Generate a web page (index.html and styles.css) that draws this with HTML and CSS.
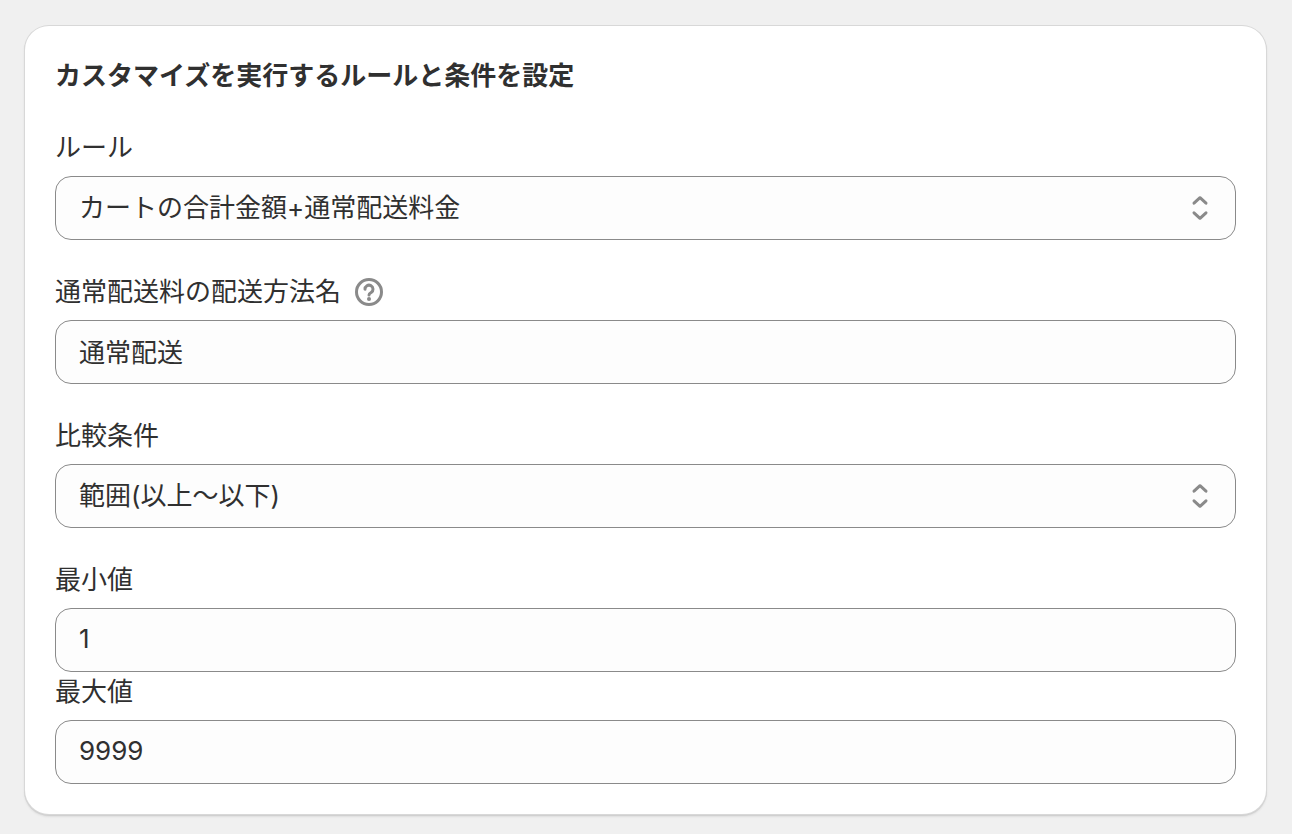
FILE: index.html
```html
<!DOCTYPE html>
<html lang="ja">
<head>
    <meta charset="UTF-8">
    <meta name="viewport" content="width=device-width, initial-scale=1.0">
    <title>ルールと条件を設定</title>
    <link rel="stylesheet" href="styles.css">
</head>
<body>
    <form class="card">
        <h2>カスタマイズを実行するルールと条件を設定</h2>
        <div class="form-group">
            <label for="rule">ルール</label>
            <div class="select">
                <select id="rule" name="rule">
                    <option>カートの合計金額+通常配送料金</option>
                </select>
                <svg class="select-icon" viewBox="0 0 20 28" aria-hidden="true"><path d="M4 9.200 10 3.700l6 5.500M4 18.800l6 5.500 6-5.500"/></svg>
            </div>
        </div>
        <div class="form-group">
            <div class="label-row">
                <label for="method_name">通常配送料の配送方法名</label>
                <button type="button" class="help" aria-label="ヘルプ">
                    <svg viewBox="0 0 28 28" aria-hidden="true"><circle cx="14" cy="14" r="12.500"/><path d="M10 11.200a4 4 0 1 1 6.200 3.300c-1.500.9-2.200 1.300-2.200 2.500"/><circle class="dot" cx="14" cy="21" r="2"/></svg>
                </button>
            </div>
            <input type="text" id="method_name" name="method_name" value="通常配送">
        </div>
        <div class="form-group">
            <label for="condition">比較条件</label>
            <div class="select">
                <select id="condition" name="condition">
                    <option>範囲(以上〜以下)</option>
                </select>
                <svg class="select-icon" viewBox="0 0 20 28" aria-hidden="true"><path d="M4 9.200 10 3.700l6 5.500M4 18.800l6 5.500 6-5.500"/></svg>
            </div>
        </div>
        <div class="form-group">
            <div>
                <label for="min_value">最小値</label>
                <input type="text" id="min_value" name="min_value" inputmode="numeric" value="1">
            </div>
            <div>
                <label for="max_value">最大値</label>
                <input type="text" id="max_value" name="max_value" inputmode="numeric" value="9999">
            </div>
        </div>
    </form>
</body>
</html>
```
FILE: styles.css
```css
* {
    box-sizing: border-box;
}
body {
    margin: 0;
    padding: 26px 26px 20px 25px;
    background-color: #f0f0f0;
    color: #303030;
    font-family: Inter, "Noto Sans CJK JP", sans-serif;
    font-size: 26px;
    line-height: 40px;
}
.card {
    padding: 30px;
    background-color: #fff;
    border-radius: 24px;
    box-shadow: 0 0 0 1px #d8d8d8, 0 1px 0 1px #d0d0d0, 0 2px 2px 1px #dedede;
}
h2 {
    margin: 0 0 32px;
    font-size: 26px;
    font-weight: 700;
    line-height: 40px;
}
.form-group {
    margin-bottom: 32px;
}
.form-group:last-child {
    margin-bottom: 0;
}
label {
    display: block;
    margin-bottom: 8px;
}
.label-row {
    display: flex;
    align-items: center;
    gap: 14px;
    margin-bottom: 8px;
}
.label-row label {
    margin-bottom: 0;
}
input,
select {
    display: block;
    width: 100%;
    height: 64px;
    padding: 0 23px;
    border: 1px solid #8a8a8a;
    border-radius: 16px;
    background-color: #fdfdfd;
    color: inherit;
    font: inherit;
    appearance: none;
}
input {
    padding-bottom: 4px;
}
.select {
    position: relative;
}
.select-icon {
    position: absolute;
    top: 18px;
    right: 26px;
    width: 20px;
    height: 28px;
    fill: none;
    stroke: #8a8a8a;
    stroke-width: 3;
    stroke-linecap: round;
    stroke-linejoin: round;
    pointer-events: none;
}
.help {
    display: flex;
    padding: 0;
    border: 0;
    background: none;
}
.help svg {
    width: 28px;
    height: 28px;
    fill: none;
    stroke: #8a8a8a;
    stroke-width: 3;
    stroke-linecap: round;
}
.help .dot {
    fill: #8a8a8a;
    stroke: none;
}
```
